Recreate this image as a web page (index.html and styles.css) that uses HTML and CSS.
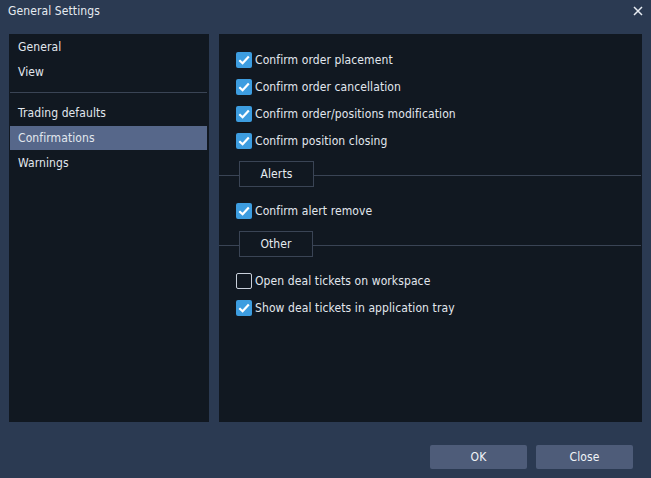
FILE: index.html
```html
<!DOCTYPE html>
<html>
<head>
<meta charset="utf-8">
<link rel="stylesheet" href="styles.css">
</head>
<body>
<div class="dialog">
  <div class="header">
    <span class="title">General Settings</span>
    <svg class="close" width="10" height="10" viewBox="0 0 10 10"><path d="M1 1L9 9M9 1L1 9" stroke="#e8edf3" stroke-width="1.5" fill="none"/></svg>
  </div>
  <div class="main">
    <div class="nav">
      <div class="nav-item">General</div>
      <div class="nav-item">View</div>
      <div class="nav-sep"></div>
      <div class="nav-item">Trading defaults</div>
      <div class="nav-item active">Confirmations</div>
      <div class="nav-item">Warnings</div>
    </div>
    <div class="content">
      <div class="row"><span class="cb on"><svg width="16" height="16" viewBox="0 0 16 16"><path d="M3.3 8.2L6.6 11.3L12.8 4.5" stroke="#fff" stroke-width="2.2" fill="none"/></svg></span>Confirm order placement</div>
      <div class="row"><span class="cb on"><svg width="16" height="16" viewBox="0 0 16 16"><path d="M3.3 8.2L6.6 11.3L12.8 4.5" stroke="#fff" stroke-width="2.2" fill="none"/></svg></span>Confirm order cancellation</div>
      <div class="row"><span class="cb on"><svg width="16" height="16" viewBox="0 0 16 16"><path d="M3.3 8.2L6.6 11.3L12.8 4.5" stroke="#fff" stroke-width="2.2" fill="none"/></svg></span>Confirm order/positions modification</div>
      <div class="row"><span class="cb on"><svg width="16" height="16" viewBox="0 0 16 16"><path d="M3.3 8.2L6.6 11.3L12.8 4.5" stroke="#fff" stroke-width="2.2" fill="none"/></svg></span>Confirm position closing</div>
      <div class="section"><span class="rule-short"></span><span class="legend">Alerts</span><span class="rule"></span></div>
      <div class="row"><span class="cb on"><svg width="16" height="16" viewBox="0 0 16 16"><path d="M3.3 8.2L6.6 11.3L12.8 4.5" stroke="#fff" stroke-width="2.2" fill="none"/></svg></span>Confirm alert remove</div>
      <div class="section"><span class="rule-short"></span><span class="legend other">Other</span><span class="rule"></span></div>
      <div class="row"><span class="cb off"></span>Open deal tickets on workspace</div>
      <div class="row"><span class="cb on"><svg width="16" height="16" viewBox="0 0 16 16"><path d="M3.3 8.2L6.6 11.3L12.8 4.5" stroke="#fff" stroke-width="2.2" fill="none"/></svg></span>Show deal tickets in application tray</div>
    </div>
  </div>
  <div class="footer">
    <button class="btn">OK</button>
    <button class="btn">Close</button>
  </div>
</div>
</body>
</html>
```
FILE: styles.css
```css
html, body {
  margin: 0;
  padding: 0;
  background: #2b3a52;
}
body {
  font-family: "DejaVu Sans Condensed", "DejaVu Sans", sans-serif;
  font-size: 12px;
  letter-spacing: 0.1px;
  color: #e2e7ee;
}
.dialog {
  width: 651px;
  height: 478px;
  display: flex;
  flex-direction: column;
  background: #2b3a52;
}
.header {
  height: 34px;
  display: flex;
  align-items: flex-start;
  justify-content: space-between;
  padding: 3px 8px 0 8px;
  box-sizing: border-box;
}
.title {
  line-height: 17px;
  color: #e6ebf1;
}
.close {
  margin-top: 3px;
}
.main {
  height: 388px;
  display: flex;
  gap: 10px;
  padding: 0 9px;
}
.nav {
  width: 200px;
  background: #111821;
  padding: 0 2px 0 1px;
  box-sizing: border-box;
}
.nav-item {
  height: 25px;
  line-height: 27px;
  padding-left: 8px;
  color: #e2e7ee;
}
.nav-item.active {
  background: #56678a;
  height: 24px;
  line-height: 25px;
  margin-top: 1px;
}
.nav-sep {
  height: 1px;
  background: #3a4455;
  margin: 8px 0 7px;
}
.content {
  flex: 1;
  background: #111821;
  padding: 12px 1px 0 0;
  box-sizing: border-box;
}
.row {
  height: 27px;
  display: flex;
  align-items: center;
  padding-left: 17px;
}
.cb {
  width: 16px;
  height: 16px;
  box-sizing: border-box;
  margin-right: 3px;
  border-radius: 2px;
  flex: none;
  display: block;
}
.cb svg { display: block; }
.cb.on {
  background: #3d9de0;
}
.cb.off {
  border: 1px solid #c9d0db;
}
.section {
  display: flex;
  align-items: flex-start;
  height: 26px;
  margin: 7px 0 10px;
}
.rule-short {
  width: 20px;
  height: 1px;
  margin-top: 14px;
  background: #3a4455;
}
.rule {
  flex: 1;
  height: 1px;
  margin-top: 14px;
  background: #3a4455;
}
.legend {
  width: 75px;
  height: 26px;
  box-sizing: border-box;
  border: 1px solid #3a4455;
  display: flex;
  align-items: center;
  justify-content: center;
  color: #e6ebf1;
}
.legend.other { width: 74px; }
.footer {
  flex: 1;
  display: flex;
  justify-content: flex-end;
  align-items: flex-start;
  gap: 9px;
  padding: 23px 18px 0 0;
}
.btn {
  width: 97px;
  height: 24px;
  border: none;
  border-radius: 2px;
  background: #4e5c79;
  color: #f1f4f8;
  font-family: inherit;
  font-size: 12px;
  letter-spacing: 0.1px;
  padding: 0;
}
```
